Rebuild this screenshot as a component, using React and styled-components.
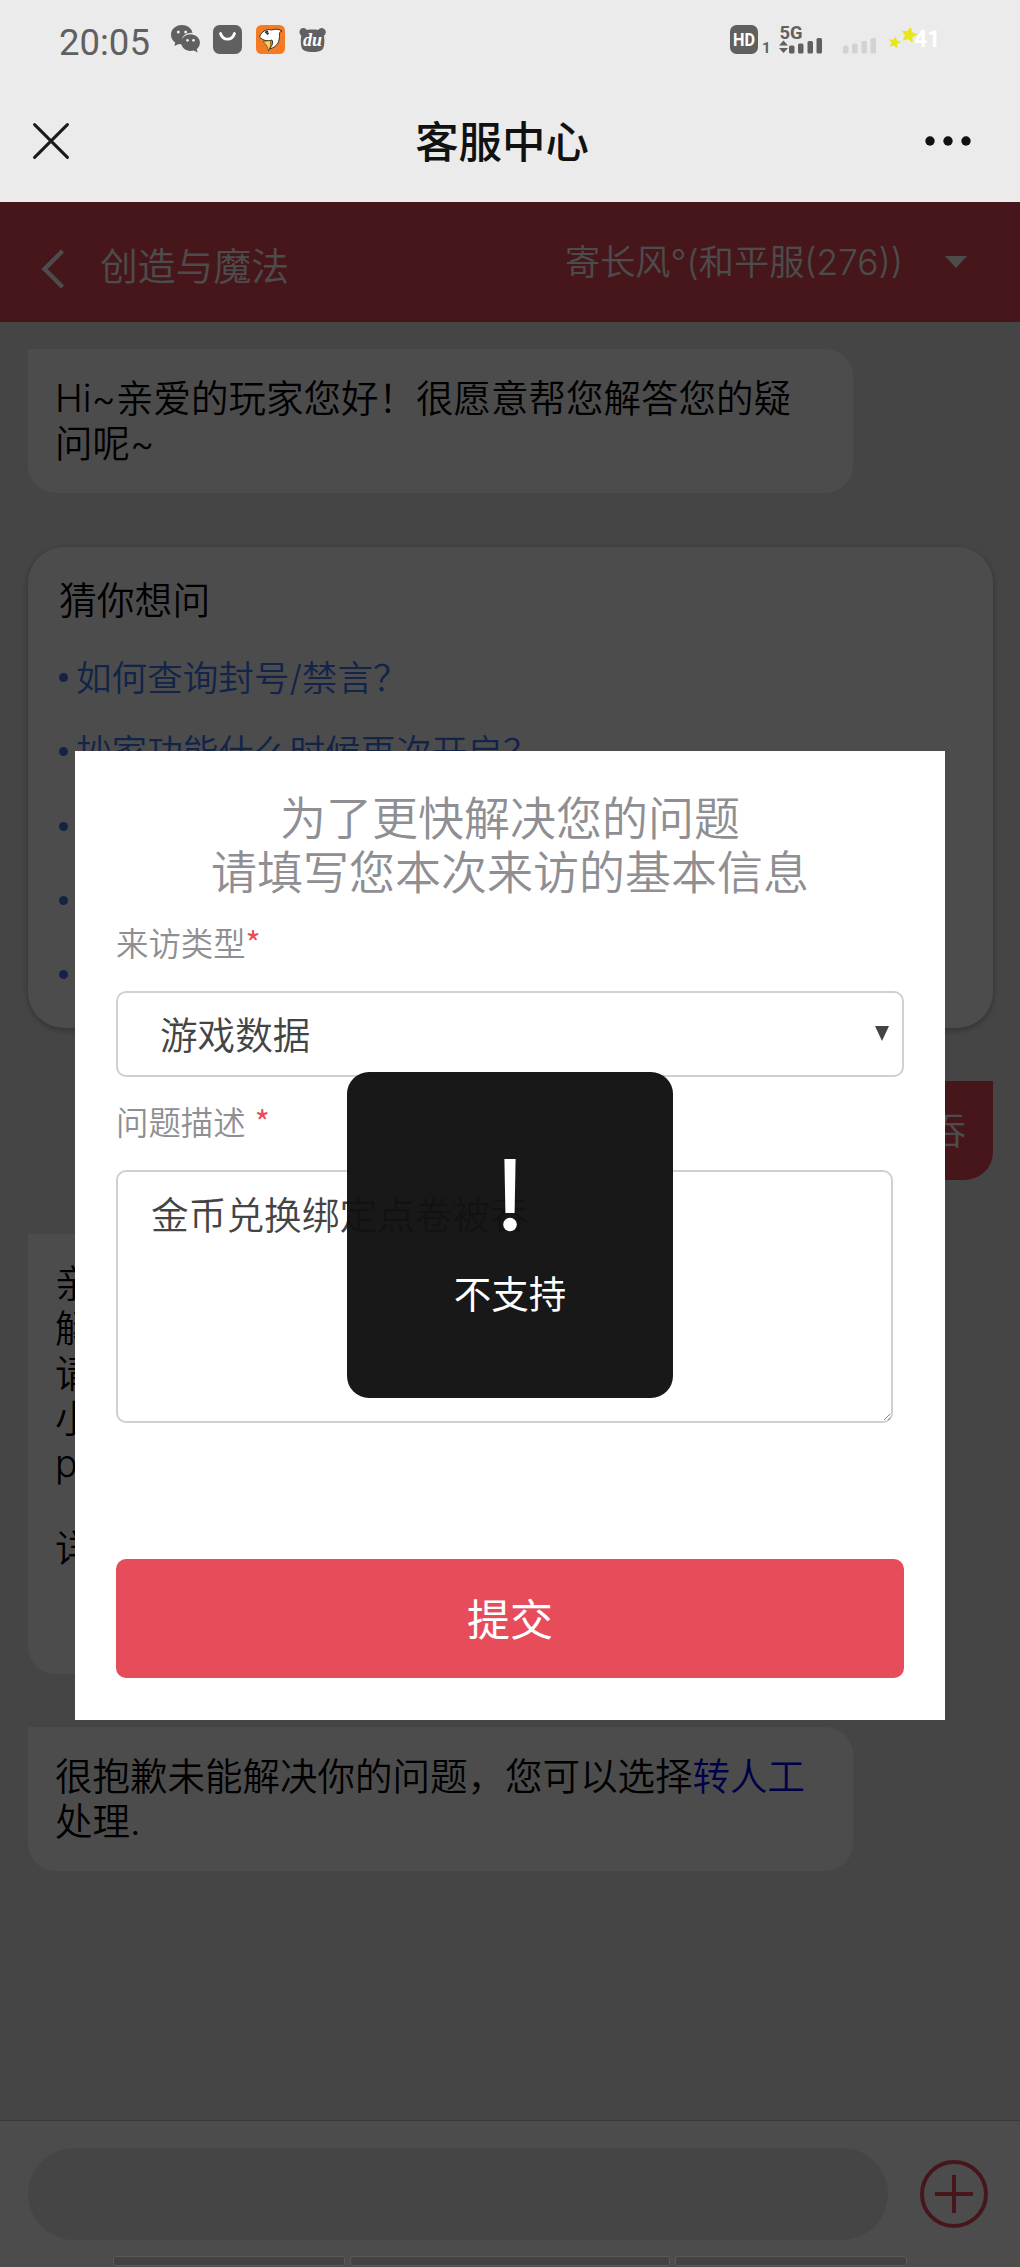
import styled, { createGlobalStyle } from "styled-components";

const questions = ["如何查询封号/禁言？", "抄家功能什么时候再次开启？", "", "", ""];

const App = () => {
  return (
    <>
      <GlobalStyle />
      <Phone>
        <StatusBar>
          <Clock>20:05</Clock>
          <AppIcons />
          <SignalIcons />
        </StatusBar>
        <TitleBar>
          <svg width="36" height="36" viewBox="0 0 36 36" stroke="#1a1a1a" strokeWidth="3" strokeLinecap="round">
            <path d="M1.600 1.600 34.400 34.400M34.400 1.600 1.600 34.400" />
          </svg>
          <PageTitle>客服中心</PageTitle>
          <svg width="46" height="10" viewBox="0 0 46 10" fill="#111">
            <circle cx="5" cy="5" r="4.700" />
            <circle cx="23" cy="5" r="4.700" />
            <circle cx="41" cy="5" r="4.700" />
          </svg>
        </TitleBar>

        <Service>
          <ServiceHeader>
            <svg width="24" height="40" viewBox="0 0 24 40" fill="none" stroke="#fff" strokeWidth="4.400">
              <path d="M21.500 2 3.500 20l18 18" />
            </svg>
            <GameName>创造与魔法</GameName>
            <Role>
              寄长风°(和平服(276))
              <RoleArrow />
            </Role>
          </ServiceHeader>

          <Chat>
            <Bubble>Hi~亲爱的玩家您好！很愿意帮您解答您的疑问呢~</Bubble>
            <GuessCard>
              <GuessTitle>猜你想问</GuessTitle>
              {questions.map((q, i) => (
                <Question key={i}>
                  <span>{q}</span>
                </Question>
              ))}
            </GuessCard>
            <Bubble $mine>金币兑换绑定点卷被吞</Bubble>
            <Bubble $tall>
              亲<br />解<br />请<br />小<br />p
              <Detail>详</Detail>
            </Bubble>
            <Bubble>
              很抱歉未能解决你的问题，您可以选择<Transfer>转人工</Transfer>处理.
            </Bubble>
          </Chat>

          <InputBar>
            <Input />
            <svg width="70" height="70" viewBox="0 0 70 70" fill="none" stroke="#e94c5a" strokeWidth="4">
              <circle cx="35" cy="35" r="32" />
              <path d="M35 16v38M16 35h38" />
            </svg>
          </InputBar>

          <Mask>
            <Modal>
              <ModalTitle>
                为了更快解决您的问题
                <br />
                请填写您本次来访的基本信息
              </ModalTitle>
              <Label>
                来访类型<Star>*</Star>
              </Label>
              <Select>
                游戏数据
                <SelectArrow />
              </Select>
              <Label>
                问题描述 <Star>*</Star>
              </Label>
              <TextArea>
                金币兑换绑定点卷被吞
                <ResizeGrip width="8" height="8" viewBox="0 0 8 8" stroke="#888">
                  <path d="M1 7 7 1M5 7l2-2" />
                </ResizeGrip>
              </TextArea>
              <Submit>提交</Submit>
            </Modal>
            <Toast>
              <svg width="16" height="74" viewBox="0 0 16 74" fill="#fff">
                <path d="M2.400 0h11.200l-1 54H3.400z" />
                <circle cx="8" cy="65.500" r="6.800" />
              </svg>
              <span>不支持</span>
            </Toast>
            <Gestures>
              <Gesture $w={232} />
              <Gesture $w={320} />
              <Gesture $w={232} />
            </Gestures>
          </Mask>
        </Service>
      </Phone>
    </>
  );
};

const AppIcons = () => (
  <svg width="160" height="32" viewBox="0 0 160 32">
    <g fill="#606060">
      <path d="M12 1C5.400 1 1 5.500 1 10.800c0 3.300 1.600 5.900 4.200 7.700L4.400 22l4.400-2c1.300.300 2.600.4 3.900.3C10 13 15 8.600 22.600 8.700 21.400 4 17 1 12 1z" />
      <path d="M20.500 10.200c-5.300 0-9.300 3.700-9.300 8.400 0 4.600 4 8.300 9.300 8.300 1.200 0 2.300-.2 3.300-.5l3.800 2-.9-3.200c2-1.600 3.200-3.900 3.200-6.600 0-4.700-4.200-8.400-9.400-8.400z" />
      <rect x="43" y="1" width="29" height="29" rx="6.500" />
      <path d="M132 4.200c2.300-.6 4 .4 4.900 1.800 2.600-.6 8.700-.6 11.300 0 1-1.400 3-2.400 5.100-1.600 3.500 1.400 3 5.800.6 7.300.9 5.200.6 11.600-1.700 14-3.500 3.200-15.500 3.200-19.200 0-2.300-2.500-2.600-8.800-1.700-14-2.400-1.900-2.600-6.200.7-7.500z" />
    </g>
    <g fill="#ebebeb">
      <circle cx="8.300" cy="8" r="1.500" />
      <circle cx="15.700" cy="8" r="1.500" />
      <circle cx="17.500" cy="16.300" r="1.400" />
      <circle cx="23.500" cy="16.300" r="1.400" />
    </g>
    <path d="M50.500 9.500c2.500 7.500 11.500 7.500 14 0" fill="none" stroke="#fff" strokeWidth="2.800" strokeLinecap="round" />
    <rect x="86" y="1" width="29" height="29" rx="5.500" fill="#f47a26" />
    <path d="M89.500 13c2-5.500 7-8.500 12-7 4-1.200 7-1.200 10.500 1-1.700.6-2.500 1.200-2.600 2.500.7 8-2 13.500-10 15.500 3-3.500 4-6.500 2.500-9-3.500 1.500-8.500 1-12.400-3z" fill="#fff" stroke="#222" strokeWidth=".9" />
    <path d="M93 17.500l7-1c1.500 4 .4 6-1.500 10.500-.5-3.500-2-6.500-5.500-9.500z" fill="#f3d35a" stroke="#222" strokeWidth=".5" />
    <path d="M95 8.500l3-1.200" stroke="#222" strokeWidth="1.500" />
    <circle cx="97.500" cy="9.500" r="1.200" fill="#222" />
    <DuText x="142.500" y="21.500" textAnchor="middle">du</DuText>
  </svg>
);

const SignalIcons = () => (
  <svg width="212" height="36" viewBox="0 0 212 36" overflow="visible">
    <rect x="1" y="1" width="28" height="29" rx="6.500" fill="#606060" />
    <HdText x="4" y="22" textLength="22" lengthAdjust="spacingAndGlyphs">HD</HdText>
    <SmallText x="33" y="29" $size={15}>1</SmallText>
    <SmallText x="50.500" y="14.800" $size={18} textLength="23" lengthAdjust="spacingAndGlyphs">5G</SmallText>
    <g fill="#606060">
      <path d="M50 21.500l4.500-5 4.500 5zM50 24l4.500 5 4.500-5z" />
      <rect x="60" y="21.500" width="5.500" height="8" rx="1.500" />
      <rect x="69" y="19.500" width="5.500" height="10" rx="1.500" />
      <rect x="78.500" y="17" width="5.500" height="12.500" rx="1.500" />
      <rect x="87.500" y="14" width="5.500" height="15.500" rx="1.500" />
    </g>
    <g fill="#d2d2d2">
      <rect x="114" y="21.500" width="5.500" height="8" rx="1.500" />
      <rect x="123" y="19.500" width="5.500" height="10" rx="1.500" />
      <rect x="132.500" y="17" width="5.500" height="12.500" rx="1.500" />
      <rect x="141.500" y="14" width="5.500" height="15.500" rx="1.500" />
    </g>
    <BatteryText x="185" y="23">41</BatteryText>
    <g fill="#e8e619">
      <path transform="translate(180 11) rotate(12)" d="M0-8.500 2.400-3.200 8.100-2.600 3.900 1.200 5 6.900 0 4 -5 6.900-3.900 1.200-8.100-2.600-2.400-3.200z" />
      <path transform="translate(165.500 18.500) rotate(12) scale(.76)" d="M0-8.500 2.400-3.200 8.100-2.600 3.900 1.200 5 6.900 0 4 -5 6.900-3.900 1.200-8.100-2.600-2.400-3.200z" />
    </g>
  </svg>
);

const GlobalStyle = createGlobalStyle`
  * {
    box-sizing: border-box;
  }
  body {
    margin: 0;
    font-family: Inter, "Noto Sans CJK SC", sans-serif;
    font-weight: 350;
  }
  svg {
    display: block;
    flex: none;
  }
`;

const Phone = styled.div`
  display: flex;
  flex-direction: column;
  width: 1020px;
  height: 2267px;
  background: #ebebeb;
  overflow: hidden;
`;

const StatusBar = styled.div`
  display: flex;
  align-items: flex-start;
  height: 80px;
  padding: 24px 79px 0 59px;

  svg:last-child {
    margin-left: auto;
  }
`;

const Clock = styled.div`
  width: 111px;
  padding-top: 1px;
  font: 400 36.5px/35px Roboto, sans-serif;
  color: #606060;
`;

const DuText = styled.text`
  font: italic 700 18px "Liberation Serif", serif;
  fill: #fff;
`;

const HdText = styled.text`
  font: 700 19px Roboto, sans-serif;
  fill: #fff;
`;

const SmallText = styled.text`
  font: 700 ${({ $size }) => $size}px Roboto, sans-serif;
  fill: #606060;
`;

const BatteryText = styled.text`
  font: 700 23px Roboto, sans-serif;
  fill: #fff;
`;

const TitleBar = styled.div`
  display: flex;
  justify-content: space-between;
  align-items: center;
  height: 122px;
  padding: 0 49px 0 33px;
`;

const PageTitle = styled.h1`
  margin: 2px 0 0 10px;
  font-size: 43.4px;
  font-weight: 500;
  line-height: 60px;
  color: #111;
`;

const Service = styled.div`
  position: relative;
  display: flex;
  flex-direction: column;
  flex: 1;
  background: #e8e8e8;
`;

const ServiceHeader = styled.div`
  display: flex;
  align-items: center;
  height: 120px;
  padding: 14px 53px 0 41px;
  background: #e94c5a;
  color: #fff;
`;

const GameName = styled.div`
  margin: -7px auto 0 35px;
  font-size: 37.8px;
  line-height: 50px;
`;

const Role = styled.div`
  display: flex;
  align-items: center;
  margin-top: -15px;
  font-size: 35.2px;
  line-height: 50px;
`;

const RoleArrow = styled.i`
  margin-left: 42px;
  border: 11px solid transparent;
  border-top: 12px solid #fff;
  border-bottom: 0;
`;

const Chat = styled.div`
  display: flex;
  flex-direction: column;
  align-items: flex-start;
  gap: 53.6px;
  flex: 1;
  padding: 27px 27px 0 28px;
`;

const Bubble = styled.div`
  align-self: ${({ $mine }) => ($mine ? "flex-end" : "flex-start")};
  width: ${({ $mine }) => ($mine ? "auto" : "825px")};
  height: ${({ $tall, $mine }) => ($tall ? "440px" : $mine ? "99px" : "144px")};
  padding: 27px 27px 0;
  border-radius: ${({ $mine }) => ($mine ? "28px 0 28px 28px" : "0 28px 28px 28px")};
  background: ${({ $mine }) => ($mine ? "#e94c5a" : "#fff")};
  color: ${({ $mine }) => ($mine ? "#fff" : "#000")};
  font-size: 37.5px;
  line-height: 45px;
`;

const Detail = styled.div`
  margin-top: 40px;
`;

const Transfer = styled.span`
  color: #0000ee;
`;

const GuessCard = styled.div`
  width: 965px;
  height: 481px;
  padding: 28px 31px;
  border-radius: 36px;
  background: #fff;
  box-shadow: 0 2px 6px rgba(0, 0, 0, 0.3);
`;

const GuessTitle = styled.div`
  margin-bottom: 16px;
  font-size: 37.8px;
  line-height: 50px;
`;

const Question = styled.div`
  display: flex;
  align-items: center;
  height: 74.2px;
  font-size: 35.6px;
  color: #3f7af0;

  span {
    padding-bottom: 4px;
  }

  &::before {
    content: "";
    width: 9px;
    height: 9px;
    margin-right: 8px;
    border-radius: 50%;
    background: #4a6ff0;
  }
`;

const InputBar = styled.div`
  display: flex;
  align-items: center;
  gap: 31px;
  height: 147px;
  padding: 0 28px;
  border-top: 1px solid #c4c4c4;
  background: #fff;
`;

const Input = styled.div`
  width: 860px;
  height: 92px;
  border-radius: 46px;
  background: #e8e8e8;
`;

const Mask = styled.div`
  position: absolute;
  inset: 0;
  display: flex;
  align-items: center;
  justify-content: center;
  background: rgba(0, 0, 0, 0.7);
`;

const Modal = styled.div`
  display: flex;
  flex-direction: column;
  width: 870px;
  height: 969px;
  margin-top: 2px;
  padding: 40px 41px 42px;
  background: #fff;
`;

const ModalTitle = styled.h2`
  margin: 0 0 -1px;
  font-size: 46px;
  font-weight: inherit;
  line-height: 54px;
  text-align: center;
  color: #8e8e93;
`;

const Label = styled.div`
  height: 45px;
  margin-top: 21px;
  margin-bottom: 27px;
  font-size: 32.4px;
  line-height: 45px;
  color: #8e8e93;
`;

const Star = styled.span`
  font-family: "Noto Sans CJK SC", sans-serif;
  font-weight: 400;
  color: #e94c5a;
`;

const Select = styled.div`
  display: flex;
  align-items: center;
  justify-content: space-between;
  height: 86px;
  padding: 0 13px 3px 42px;
  border: 2px solid #d0d0d0;
  border-radius: 10px;
  font-size: 37.6px;
  color: #444;
`;

const SelectArrow = styled.i`
  margin-top: 2px;
  border: 7.5px solid transparent;
  border-top: 15px solid #444;
  border-bottom: 0;
`;

const TextArea = styled.div`
  position: relative;
  width: 777px;
  height: 253px;
  padding: 18px 33px;
  border: 2px solid #d0d0d0;
  border-radius: 10px;
  font-size: 37.7px;
  line-height: 50px;
  color: #444;
`;

const ResizeGrip = styled.svg`
  position: absolute;
  right: 0;
  bottom: 0;
`;

const Submit = styled.button`
  height: 119px;
  margin-top: auto;
  padding: 0 0 4px;
  border: 0;
  border-radius: 10px;
  background: #e74c5b;
  color: #fff;
  font-family: inherit;
  font-size: 43px;
  font-weight: 400;
`;

/* sits on top of the form, centred in the mask */
const Toast = styled.div`
  position: absolute;
  top: 870px;
  left: 347px;
  display: flex;
  flex-direction: column;
  align-items: center;
  width: 326px;
  height: 326px;
  padding-top: 87px;
  border-radius: 22px;
  background: rgba(17, 17, 17, 0.97);
  color: #fff;
  font-size: 37.5px;
  font-weight: 400;
  line-height: 50px;

  span {
    margin-top: 37px;
  }
`;

const Gestures = styled.div`
  position: absolute;
  bottom: 1px;
  left: 113px;
  display: flex;
  gap: 5px;
`;

const Gesture = styled.div`
  width: ${({ $w }) => $w}px;
  height: 10px;
  border: 1.5px solid #5a5a5a;
  border-radius: 3px;
  background: #424242;
`;

export default App;
